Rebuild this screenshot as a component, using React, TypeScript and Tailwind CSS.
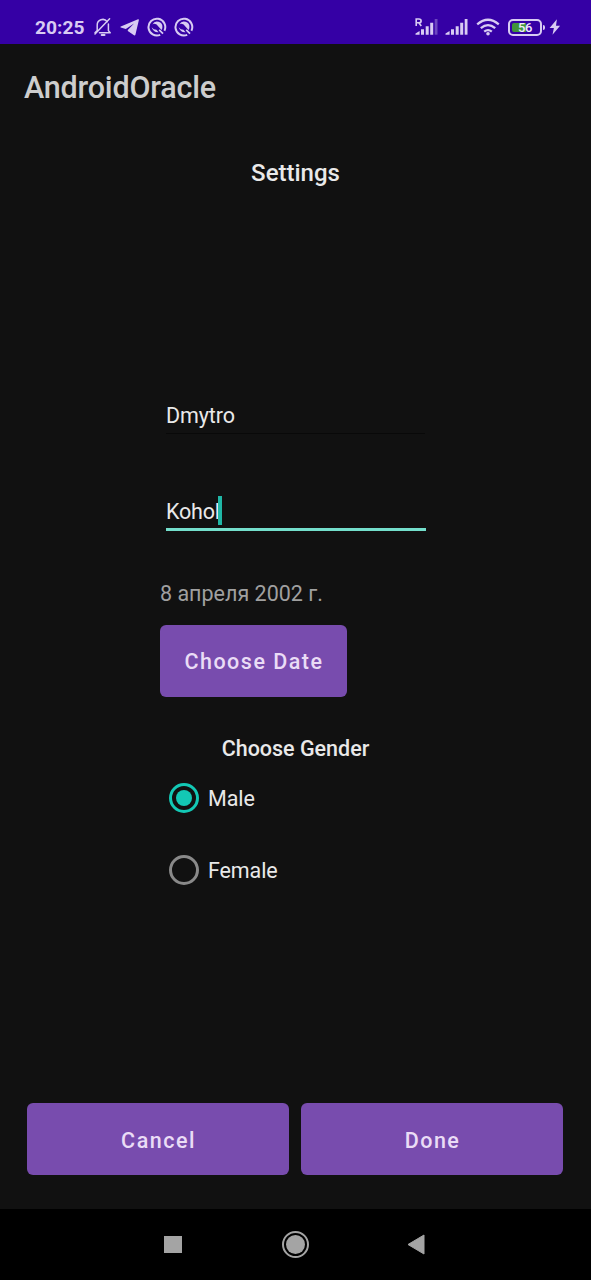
import React from "react";

const BellOff = () => (
  <svg className="ml-2 h-5 w-5 shrink-0" viewBox="0 0 20 20" fill="none" stroke="#d8cbf3" strokeWidth="1.5" strokeLinecap="round" strokeLinejoin="round">
    <path d="M4.2 12.6V8.2a5.6 5.6 0 0 1 10-3.6M15.4 7v6.6l1.8 2.2H6.5" />
    <path d="M16.6 1.8 2 17M2 15.8l2.2-2.4" />
    <path d="M8.6 18h3" strokeWidth="1.8" />
  </svg>
);

const Plane = () => (
  <svg className="ml-[7px] h-5 w-5 shrink-0" viewBox="0 0 20 20" fill="#d8cbf3">
    <path d="M18 2.2.8 9.6q-.9.5 0 .9l5 1.5 8.2-5.6-6.2 6.5v1l6.2 4.4q1 .5 1.4-.5L18.9 3q.1-1-.9-.8Z" />
  </svg>
);

const RingBadge = () => (
  <svg className="ml-[7px] h-5 w-5 shrink-0" viewBox="0 0 20 20" fill="none" stroke="#d8cbf3">
    <path d="M13.2 17.8A8.4 8.4 0 1 1 17.4 13.8" strokeWidth="2" />
    <path d="M5.4 7.4a5.3 5.2 0 0 1 10 2.8q0 1.5-.9 2.8L9.6 7.6Q7.2 6.2 5.4 7.4Z" fill="#d8cbf3" stroke="none" />
    <path d="M4.6 10.2q1.8 5.4 7 5L9.4 12.8Q6.6 12.8 4.6 10.2Z" fill="#d8cbf3" stroke="none" />
    <path d="m12.2 12.8 3.8 3.8" strokeWidth="1.7" />
  </svg>
);

const Signal = ({ roaming = false }: { roaming?: boolean }) => (
  <svg className="h-5 w-6 shrink-0" viewBox="0 0 24 20" fill="#d8cbf3">
    <path d="M.5 17.7v-1.3L4.6 14v3.7ZM6 12.2h3v5.5H6ZM10.7 9.2h3v8.5h-3ZM15.2 5.7h3v12h-3Z" />
    <path d="M19.7 2H22.5v15.7h-2.8Z" opacity={roaming ? 0.35 : 1} />
    {roaming && <path d="M1.2 9V2h2.7q2.2 0 2.2 1.9T3.9 5.8H1.2M4 6l2.3 3" fill="none" stroke="#d8cbf3" strokeWidth="1.6" />}
  </svg>
);

const Wifi = () => (
  <svg className="ml-[7px] h-5 w-6 shrink-0" viewBox="0 0 24 20" fill="none" stroke="#d8cbf3" strokeWidth="2.3">
    <path d="M1.2 7.3Q12-1.8 22.8 7.3M4.8 11.2q7.2-6.2 14.4 0M8.2 14.7q3.8-3.1 7.6 0" />
    <circle cx="12" cy="16.8" r="1.8" fill="#d8cbf3" stroke="none" />
  </svg>
);

const Radio = ({ checked = false }: { checked?: boolean }) => (
  <span className={`flex h-[30px] w-[30px] shrink-0 items-center justify-center rounded-full border-3 ${checked ? "border-[#13c8b5]" : "border-[#898989]"}`}>
    {checked && <span className="h-4 w-4 rounded-full bg-[#13c8b5]" />}
  </span>
);

const buttonStyle = "flex h-[72px] items-center justify-center rounded-[6px] bg-[#784cae] text-[21.5px] leading-6 font-medium text-[#eadcf6]";

export default function App() {
  return (
    <div className="flex h-[1280px] w-[591px] flex-col overflow-hidden bg-[#111111] font-['Roboto',sans-serif] text-[#e9e9e9]">
      <header className="flex h-11 shrink-0 items-center bg-[#3500a5] pt-[10px] pl-[35px] text-[#d8cbf3]">
        <span className="w-[50px] pt-px text-[19.2px] leading-5 font-bold">20:25</span>
        <BellOff />
        <Plane />
        <RingBadge />
        <RingBadge />
        <div className="ml-auto flex w-[176px] items-center">
          <Signal roaming />
          <div className="ml-[6px] flex"><Signal /></div>
          <Wifi />
          <div className="relative ml-2 flex h-[17px] w-[34px] items-center justify-center rounded-[5px] border-2 border-[#d8cbf3]">
            <span className="absolute top-[2px] left-[2px] h-[9px] w-[14px] rounded-l-[2px] bg-[#41943b]" />
            <span className="relative pt-px text-[13px] leading-3 font-medium tracking-[-0.5px] text-[#f0eaff]">56</span>
          </div>
          <span className="ml-px h-[5px] w-[2px] rounded-r bg-[#d8cbf3]" />
          <svg className="ml-1 h-4 w-3" viewBox="0 0 12 16" fill="#d8cbf3"><path d="M7.9.2.6 8.9h4.3L3.5 15.8l7.6-9H7Z" /></svg>
        </div>
      </header>

      <div className="flex h-[88px] shrink-0 items-center pl-6">
        <h1 className="text-[30.5px] leading-9 font-medium tracking-[-0.2px] text-[#cdcdcd]">AndroidOracle</h1>
      </div>

      <main className="flex flex-1 flex-col">
        <h2 className="mt-[25px] text-center text-[24px] leading-8 font-medium">Settings</h2>

        <form className="mt-[209px] ml-[160px] flex w-[271px] flex-col">
          <div className="mx-[6px] flex h-[36px] items-start border-b border-[#090909] text-[21.5px] leading-[36px] tracking-[-0.1px]">Dmytro</div>
          <div className="mx-[6px] mt-[61px] flex h-[36px] w-[260px] items-start border-b-3 border-[#74dfcc] text-[21.5px] leading-[33px] tracking-[-0.2px]">
            <span className="w-[52px] whitespace-nowrap">Kohol</span>
            <span className="relative mt-px h-[29px] w-1 bg-[#20b7a6]" />
          </div>
          <p className="mt-[47px] text-[21.5px] leading-8 text-[#a0a0a0]">8 апреля 2002 г.</p>
          <button type="button" className={`${buttonStyle} mt-[15px] w-[187px] pt-px pl-px tracking-[1.5px]`}>Choose Date</button>
          <h3 className="mt-9 text-center text-[21.5px] leading-8 font-medium">Choose Gender</h3>
          <label className="mt-[18px] flex h-[30px] items-center gap-[9px] pl-[9px] text-[21.5px] tracking-[-0.1px]"><Radio checked /><span className="pt-[2px]">Male</span></label>
          <label className="mt-[42px] flex h-[30px] items-center gap-[9px] pl-[9px] text-[21.5px] tracking-[-0.1px]"><Radio /><span className="pt-[2px]">Female</span></label>
        </form>

        <div className="mt-auto mb-[34px] flex gap-3 pr-7 pl-[27px]">
          <button className={`${buttonStyle} flex-1 pt-[3px] pl-px tracking-[1.5px]`}>Cancel</button>
          <button className={`${buttonStyle} flex-1 pt-[3px] pl-px tracking-[1.5px]`}>Done</button>
        </div>
      </main>

      <nav className="flex h-[71px] shrink-0 items-center bg-black pl-[164px]">
        <span className="h-[17px] w-[18px] bg-[#a4a4a4]" />
        <span className="ml-[100px] flex h-[27px] w-[27px] items-center justify-center rounded-full border-2 border-[#a4a4a4]">
          <span className="h-[19px] w-[19px] rounded-full bg-[#a4a4a4]" />
        </span>
        <svg className="ml-[98px] h-[21px] w-[18px]" viewBox="0 0 18 21"><path d="M17 1v19L1 10.5Z" fill="#a4a4a4" stroke="#a4a4a4" strokeLinejoin="round" /></svg>
      </nav>
    </div>
  );
}
